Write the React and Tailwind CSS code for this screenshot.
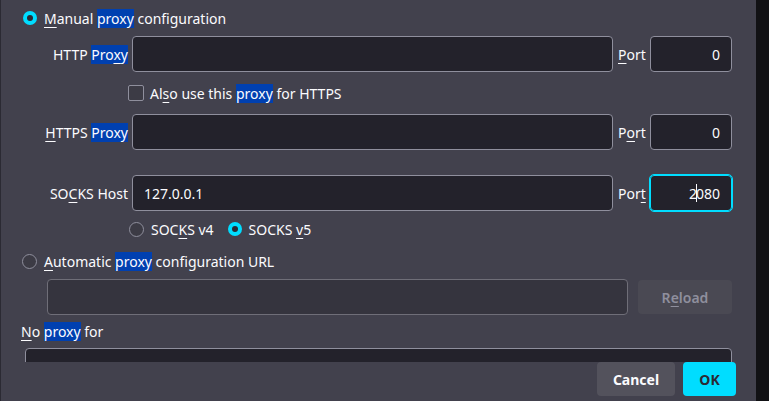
const hl = 'bg-[#0040b0]'

function Key({ children }) {
  return <span className="underline underline-offset-[3px] decoration-1">{children}</span>
}

function Hl({ children }) {
  return <span className={hl}>{children}</span>
}

function Radio({ checked }) {
  if (checked) {
    return (
      <span className="w-[14px] h-[14px] rounded-full bg-[#00ddff] flex items-center justify-center shrink-0">
        <span className="w-[6px] h-[6px] rounded-full bg-[#2b2a33]" />
      </span>
    )
  }
  return <span className="w-[15px] h-[15px] rounded-full border border-[#8f8f9d] bg-[#3c3b45] shrink-0" />
}

function Input({ value, right, focused, className = '' }) {
  return (
    <div
      className={
        'h-[36px] rounded-[4px] bg-[#23222b] flex items-center px-[11px] ' +
        (right ? 'justify-end ' : '') +
        (focused ? 'border border-[#00ddff] outline outline-1 outline-[#00ddff] ' : 'border border-[#8f8f9d] ') +
        className
      }
    >
      {value}
    </div>
  )
}

function ProxyRow({ label, value, port, portLabel, focused }) {
  return (
    <div className="h-[36px] flex items-center">
      <div className="w-[111px] text-right pr-[4px] whitespace-nowrap">{label}</div>
      <Input value={value} className="w-[481px]" />
      <div className="w-[37px] pl-[5px]">{portLabel}</div>
      <Input value={port} right focused={focused} className="w-[82px]" />
    </div>
  )
}

export default function App() {
  return (
    <div
      className="w-[769px] h-[401px] flex overflow-hidden text-[14px] text-[#fbfbfe] leading-[19px]"
      style={{ fontFamily: '"Noto Sans", "Open Sans", sans-serif' }}
    >
      <div className="w-px bg-[#2b2a33]" />
      <div className="w-[755px] bg-[#42414d] flex flex-col">
        <div className="h-[362px] overflow-hidden pl-[20px]">
          <div className="h-[36px] flex items-center gap-[7px] pl-[2px]">
            <Radio checked />
            <span>
              <Key>M</Key>anual <Hl>proxy</Hl> configuration
            </span>
          </div>

          <ProxyRow
            label={<>HTTP <Hl>Pro<Key>x</Key>y</Hl></>}
            portLabel={<><Key>P</Key>ort</>}
            value=""
            port="0"
          />

          <div className="h-[42px] flex items-center pl-[107px] gap-[6px]">
            <span className="w-[16px] h-[16px] rounded-[2px] border border-[#8f8f9d] bg-[#3c3b45]" />
            <span>
              Al<Key>s</Key>o use this <Hl>proxy</Hl> for HTTPS
            </span>
          </div>

          <ProxyRow
            label={<><Key>H</Key>TTPS <Hl>Proxy</Hl></>}
            portLabel={<>P<Key>o</Key>rt</>}
            value=""
            port="0"
          />

          <div className="h-[25px]" />

          <ProxyRow
            label={<>SO<Key>C</Key>KS Host</>}
            portLabel={<>Por<Key>t</Key></>}
            value="127.0.0.1"
            port={<>2<span className="inline-block w-px h-[18px] bg-[#fbfbfe] align-middle -mx-px" />080</>}
            focused
          />

          <div className="h-[36px] flex items-center pl-[108px]">
            <Radio />
            <span className="ml-[7px]">
              SOC<Key>K</Key>S v4
            </span>
            <span className="ml-[14px]">
              <Radio checked />
            </span>
            <span className="ml-[7px]">
              SOCKS <Key>v</Key>5
            </span>
          </div>

          <div className="h-[28px] flex items-center gap-[7px] pl-px">
            <Radio />
            <span>
              <Key>A</Key>utomatic <Hl>proxy</Hl> configuration URL
            </span>
          </div>

          <div className="mt-[4px] h-[36px] flex items-center pl-[26px] gap-[10px]">
            <div className="w-[581px] h-[36px] rounded-[4px] border border-[#6f6e78] bg-[#35343e]" />
            <button className="w-[94px] h-[34px] rounded-[4px] bg-[#4a4953] text-[#8f8f9d] font-semibold">
              R<Key>e</Key>load
            </button>
          </div>

          <div className="h-[33px] flex items-center">
            <span>
              <Key>N</Key>o <Hl>proxy</Hl> for
            </span>
          </div>

          <div className="ml-[4px] w-[707px] h-[60px] rounded-[4px] border border-[#8f8f9d] bg-[#23222b]" />
        </div>

        <div className="h-[39px] flex justify-end gap-[8px] pr-[20px]">
          <button className="w-[78px] h-[34px] rounded-[4px] bg-[#53525c] font-bold text-[#fbfbfe]">
            Cancel
          </button>
          <button className="w-[53px] h-[34px] rounded-[4px] bg-[#00ddff] font-bold text-[#2b2a33]">
            OK
          </button>
        </div>
      </div>
      <div className="flex-1 bg-[#111114]" />
    </div>
  )
}
